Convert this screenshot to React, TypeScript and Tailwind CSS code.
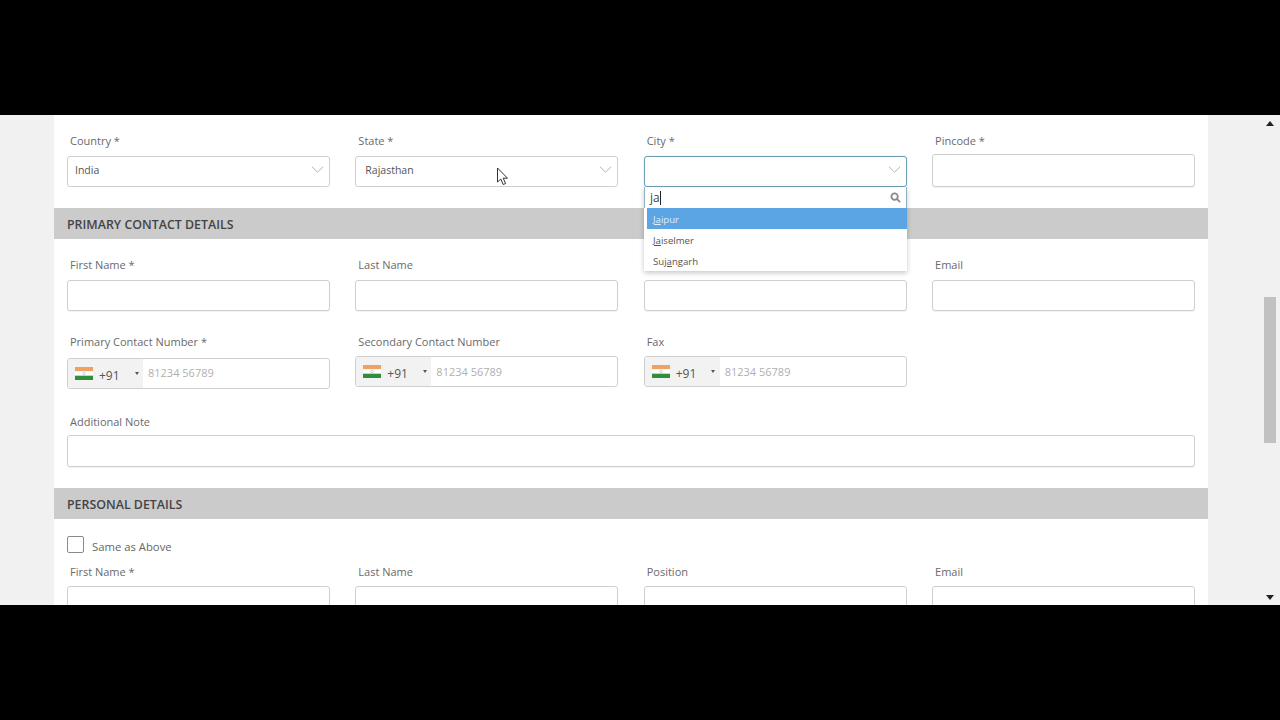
import React from "react";

const font = { fontFamily: '"Open Sans", "Noto Sans", sans-serif' };

function Chevron() {
  return (
    <svg width="13" height="7" viewBox="0 0 13 7" fill="none" className="shrink-0">
      <path d="M1 .8l5.5 5.4L12 .8" stroke="#b4b4b4" strokeWidth="1" />
    </svg>
  );
}

function Flag() {
  return (
    <svg width="18" height="13" viewBox="0 0 18 13" className="shrink-0">
      <rect width="18" height="4.3" fill="#f0a060" />
      <rect y="4.3" width="18" height="4.4" fill="#ffffff" />
      <rect y="8.7" width="18" height="4.3" fill="#2f8f3a" />
      <circle cx="9" cy="6.5" r="1.3" fill="none" stroke="#9aa8c2" strokeWidth="0.5" />
    </svg>
  );
}

function Label({ children }: { children: React.ReactNode }) {
  return <div className="h-[18px] pl-[3px] text-[11px] leading-[18px] text-[#6a6a6a] whitespace-nowrap">{children}</div>;
}

function Input({ className = "" }: { className?: string }) {
  return <div className={"h-[31px] rounded-[3px] border border-[#cfcfcf] bg-white shadow-[0_1px_1px_rgba(0,0,0,0.06)] " + className} />;
}

function Select({ value, focus = false, className = "pl-[7px]" }: { value?: string; focus?: boolean; className?: string }) {
  return (
    <div
      className={
        "mt-[6px] flex h-[31px] items-center justify-between rounded-[3px] border bg-white pr-[5px] text-[10.5px] text-[#555] " +
        (focus ? "border-[#6f9fb5] shadow-[0_0_2px_#bfe3f2] " : "border-[#cfcfcf] ") +
        className
      }
    >
      <span className="-mt-[2px]">{value}</span>
      <span className="-mt-[5px]">
        <Chevron />
      </span>
    </div>
  );
}

function Phone({ className = "", hint = "" }: { className?: string; hint?: string }) {
  return (
    <div className={"flex h-[31px] overflow-hidden rounded-[3px] border border-[#cfcfcf] bg-white " + className}>
      <div className="flex w-[75px] items-center bg-[#f2f2f2] pl-[7px] text-[12px] text-[#555]">
        <Flag />
        <span className="ml-[6px] mt-[4px]">+91</span>
        <span className="ml-[15px] h-0 w-0 border-x-[2.5px] border-t-[3px] border-x-transparent border-t-[#555]" />
      </div>
      <div className={"flex items-center pl-[5px] text-[11px] text-[#b0b0b0] " + hint}>81234 56789</div>
    </div>
  );
}

function Section({ children }: { children: React.ReactNode }) {
  return (
    <div className="flex h-[31px] items-center bg-[#cbcbcb] pl-[13px] pt-[3px] text-[12.4px] font-semibold text-[#444]">{children}</div>
  );
}

function Grid({ children, className = "" }: { children: React.ReactNode; className?: string }) {
  return <div className={"grid grid-cols-4 gap-x-[25.4px] px-[13px] " + className}>{children}</div>;
}

export default function App() {
  return (
    <div className="flex h-[720px] w-[1280px] flex-col overflow-hidden bg-black" style={font}>
      <div className="h-[115px] shrink-0" />
      <div className="flex h-[490px] shrink-0 overflow-hidden bg-[#f1f1f1]">
        <div className="w-[54px] shrink-0" />
        <main className="relative w-[1154px] shrink-0 overflow-hidden bg-white">
          <Grid className="pt-[17px]">
            <div>
              <Label>Country *</Label>
              <Select value="India" />
            </div>
            <div>
              <Label>State *</Label>
              <Select value="Rajasthan" className="pl-[9px]" />
            </div>
            <div>
              <Label>City *</Label>
              <Select focus />
            </div>
            <div>
              <Label>Pincode *</Label>
              <Input className="mt-[4px] h-[33px]" />
            </div>
          </Grid>

          <div className="mt-[21px]">
            <Section>PRIMARY CONTACT DETAILS</Section>
          </div>

          <Grid className="pt-[17px]">
            <div>
              <Label>First Name *</Label>
              <Input className="mt-[6px]" />
            </div>
            <div>
              <Label>Last Name</Label>
              <Input className="mt-[6px]" />
            </div>
            <div>
              <Label>Position</Label>
              <Input className="mt-[6px]" />
            </div>
            <div>
              <Label>Email</Label>
              <Input className="mt-[6px]" />
            </div>
          </Grid>

          <Grid className="pt-[22px]">
            <div>
              <Label>Primary Contact Number *</Label>
              <Phone className="mt-[7px]" />
            </div>
            <div>
              <Label>Secondary Contact Number</Label>
              <Phone className="mt-[5px]" hint="pt-[2px]" />
            </div>
            <div>
              <Label>Fax</Label>
              <Phone className="mt-[5px]" hint="pt-[2px]" />
            </div>
          </Grid>

          <div className="px-[13px] pt-[24px]">
            <Label>Additional Note</Label>
            <Input className="mt-[4px] h-[32px]" />
          </div>

          <div className="mt-[21px]">
            <Section>PERSONAL DETAILS</Section>
          </div>

          <div className="flex items-center px-[13px] pt-[15px]">
            <div className="h-[17px] w-[17px] rounded-[2px] border border-[#8a8a8a] bg-white" />
            <span className="ml-[8px] mt-[5px] text-[11.3px] text-[#666]">Same as Above</span>
          </div>

          <Grid className="pt-[7px]">
            <div>
              <Label>First Name *</Label>
              <Input className="mt-[5px]" />
            </div>
            <div>
              <Label>Last Name</Label>
              <Input className="mt-[5px]" />
            </div>
            <div>
              <Label>Position</Label>
              <Input className="mt-[5px]" />
            </div>
            <div>
              <Label>Email</Label>
              <Input className="mt-[5px]" />
            </div>
          </Grid>

          {/* City dropdown */}
          <div className="absolute left-[590px] top-[72px] z-10 w-[263px] bg-white shadow-[0_2px_5px_rgba(0,0,0,0.22)]">
            <div className="flex h-[21px] items-center justify-between border-x border-[#8fb4c4] pl-[5px] pr-[5px] text-[12px] text-[#444]">
              <span className="flex items-center">
                ja<span className="ml-[0.5px] h-[14px] w-px bg-[#222]" />
              </span>
              <svg width="11" height="11" viewBox="0 0 24 24" fill="none" stroke="#8a8a8a" strokeWidth="4">
                <circle cx="10" cy="10" r="7" />
                <path d="M15 15l7 7" />
              </svg>
            </div>
            <div className="ml-[3px] flex h-[21px] items-center bg-[#5ca5e4] pl-[6px] pt-[4px] text-[9.6px] text-[#dfeefa]">
              <span><u>Ja</u>ipur</span>
            </div>
            <div className="flex h-[21px] items-center pl-[9px] pt-[4px] text-[9.6px] text-[#555]">
              <span><u>Ja</u>iselmer</span>
            </div>
            <div className="flex h-[21px] items-center pl-[9px] pt-[4px] text-[9.6px] text-[#555]">
              <span>Su<u>ja</u>ngarh</span>
            </div>
          </div>

          {/* Mouse pointer */}
          <svg width="13" height="19" viewBox="0 0 13 19" className="absolute left-[442px] top-[52px] z-20">
            <path d="M1.5 1v14l3.3-3 2.4 5.5 2.4-1-2.4-5.3h4.3z" fill="#fff" stroke="#333" strokeWidth="1" />
          </svg>
        </main>
        <div className="relative w-[72px] shrink-0">
          <div className="ml-[56px] flex h-full w-[12px] flex-col items-center">
            <div className="mt-[6px] h-0 w-0 border-x-[4px] border-b-[5px] border-x-transparent border-b-[#222]" />
            <div className="mt-[171px] h-[146px] w-[12px] bg-[#c1c1c1]" />
            <div className="mt-auto mb-[5px] h-0 w-0 border-x-[4px] border-t-[5px] border-x-transparent border-t-[#222]" />
          </div>
        </div>
      </div>
    </div>
  );
}
